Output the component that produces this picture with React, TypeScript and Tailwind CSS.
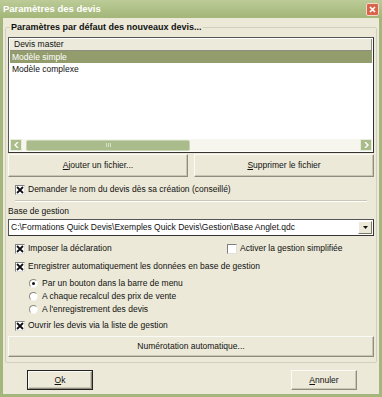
function CheckBox({ checked, label, className = "" }: { checked: boolean; label: string; className?: string }) {
  return (
    <div className={`flex items-center gap-[3px] ${className}`}>
      <div className="w-[10px] h-[10px] bg-white border border-[#1c5180] border-t-[#7f7f7f] border-l-[#7f7f7f] border-b-[#e0e0e0] border-r-[#e0e0e0] flex items-center justify-center">
        {checked && (
          <svg width="8" height="8" viewBox="0 0 8 8">
            <path d="M1 1 L7 7 M7 1 L1 7" stroke="#111" strokeWidth="1.8" />
          </svg>
        )}
      </div>
      <span>{label}</span>
    </div>
  );
}

function Radio({ checked, label }: { checked: boolean; label: string }) {
  return (
    <div className="flex items-center gap-[4px] h-[13px]">
      <div className="w-[9px] h-[9px] rounded-full bg-white border border-t-[#8a8a80] border-l-[#8a8a80] border-b-[#f4f4f0] border-r-[#f4f4f0] flex items-center justify-center">
        {checked && <div className="w-[3px] h-[3px] rounded-full bg-[#111]" />}
      </div>
      <span>{label}</span>
    </div>
  );
}

function Button({ children, className = "" }: { children: React.ReactNode; className?: string }) {
  return (
    <div
      className={`flex items-center justify-center bg-[#ece9d8] border border-t-[#fbfbf6] border-l-[#fbfbf6] border-b-[#8e8c7e] border-r-[#8e8c7e] shadow-[inset_-1px_-1px_0_#c9c6b4] ${className}`}
    >
      {children}
    </div>
  );
}

export default function App() {
  return (
    <div
      className="w-[382px] h-[397px] bg-[#a4b67c] flex flex-col text-[8.5px] text-[#111] overflow-hidden"
      style={{ fontFamily: '"Liberation Sans", Arial, sans-serif' }}
    >
      {/* title bar */}
      <div className="h-[18px] flex items-center justify-between pl-[3px] pr-[3px] bg-gradient-to-b from-[#bccb98] to-[#a3b678]">
        <span className="text-white font-bold text-[9.5px]">Paramètres des devis</span>
        <div className="w-[13px] h-[13px] rounded-[2px] bg-[#d9644c] border border-[#f3d8cc] flex items-center justify-center">
          <svg width="7" height="7" viewBox="0 0 7 7">
            <path d="M1 1 L6 6 M6 1 L1 6" stroke="#fff" strokeWidth="1.6" />
          </svg>
        </div>
      </div>

      {/* body */}
      <div className="flex-1 mx-[3px] mb-[3px] bg-[#ece9d8] flex flex-col px-[2px]">
        {/* group box */}
        <div className="relative mt-[9px] border border-[#d0d0bf] rounded-[2px] px-[2px] pt-[9px] pb-[5px] flex flex-col">
          <div className="absolute -top-[6px] left-[4px] bg-[#ece9d8] px-[1px] font-bold text-[9px] leading-[11px]">
            Paramètres par défaut des nouveaux devis...
          </div>

          {/* list */}
          <div className="h-[116px] border border-t-[#555] border-l-[#555] border-r-[#333] border-b-[#333] bg-white flex flex-col">
            <div className="h-[12px] mx-[1px] mt-[1px] bg-[#ebeadb] border-b border-[#8f8e80] border-r border-r-[#8f8e80] flex items-center pl-[4px]">
              Devis master
            </div>
            <div className="h-[12px] mx-[1px] bg-[#939c6c] text-white flex items-center pl-[2px]">Modèle simple</div>
            <div className="h-[13px] flex items-center pl-[3px]">Modèle complexe</div>
            <div className="flex-1" />
            {/* scrollbar */}
            <div className="h-[12px] mx-[1px] mb-[1px] bg-[#f6f6ee] flex items-center">
              <div className="w-[12px] h-[12px] bg-[#a9bc8a] border border-[#e6eedb] flex items-center justify-center">
                <svg width="5" height="6" viewBox="0 0 5 6">
                  <path d="M4 0 L1 3 L4 6" stroke="#fff" strokeWidth="1.4" fill="none" />
                </svg>
              </div>
              <div className="ml-[4px] w-[164px] h-[11px] bg-[#aabc8c] rounded-[2px] border border-[#c7d4b2] flex items-center justify-center">
                <div className="w-[5px] h-[4px] border-l border-r border-[#d7e1c6] relative">
                  <div className="absolute left-[1px] top-0 w-[1px] h-[4px] bg-[#d7e1c6]" />
                </div>
              </div>
              <div className="flex-1" />
              <div className="w-[12px] h-[12px] bg-[#a9bc8a] border border-[#e6eedb] flex items-center justify-center">
                <svg width="5" height="6" viewBox="0 0 5 6">
                  <path d="M1 0 L4 3 L1 6" stroke="#fff" strokeWidth="1.4" fill="none" />
                </svg>
              </div>
            </div>
          </div>

          {/* add/remove buttons */}
          <div className="flex gap-[6px] mt-[1px]">
            <Button className="flex-1 h-[23px]">
              <span>
                <span className="underline">A</span>jouter un fichier...
              </span>
            </Button>
            <Button className="flex-1 h-[23px]">
              <span>
                <span className="underline">S</span>upprimer le fichier
              </span>
            </Button>
          </div>

          <CheckBox checked label="Demander le nom du devis dès sa création (conseillé)" className="ml-[7px] mt-[7px] h-[11px]" />

          <div className="mx-[7px] mt-[5px] h-[2px] border-t border-[#c8c6b6] border-b border-b-white" />

          <div className="mt-[4px] ml-[0px] h-[11px] flex items-center">Base de gestion</div>

          {/* combo */}
          <div className="mt-[2px] h-[17px] bg-white border border-t-[#555] border-l-[#555] border-r-[#333] border-b-[#333] flex items-center pl-[2px] pr-[1px]">
            <span className="flex-1">C:\Formations Quick Devis\Exemples Quick Devis\Gestion\Base Anglet.qdc</span>
            <div className="w-[14px] h-[13px] bg-[#ece9d8] border border-t-[#fff] border-l-[#fff] border-b-[#7a7868] border-r-[#7a7868] flex items-center justify-center">
              <svg width="5" height="3" viewBox="0 0 5 3">
                <path d="M0 0 L5 0 L2.5 3 Z" fill="#111" />
              </svg>
            </div>
          </div>

          <div className="flex mt-[7px] h-[11px] ml-[7px]">
            <CheckBox checked label="Imposer la déclaration" className="w-[212px]" />
            <CheckBox checked={false} label="Activer la gestion simplifiée" />
          </div>

          <CheckBox checked label="Enregistrer automatiquement les données en base de gestion" className="ml-[7px] mt-[7px] h-[11px]" />

          <div className="flex flex-col ml-[21px] mt-[5px]">
            <Radio checked label="Par un bouton dans la barre de menu" />
            <Radio checked={false} label="A chaque recalcul des prix de vente" />
            <Radio checked={false} label="A l'enregistrement des devis" />
          </div>

          <CheckBox checked label="Ouvrir les devis via la liste de gestion" className="ml-[7px] mt-[4px] h-[11px]" />

          <Button className="mt-[5px] h-[21px]">Numérotation automatique...</Button>
        </div>

        {/* bottom buttons */}
        <div className="flex justify-between mt-[7px] pl-[22px] pr-[20px]">
          <div className="w-[66px] h-[20px] border border-[#222] flex">
            <Button className="flex-1">
              <span className="underline">O</span>
              <span>k</span>
            </Button>
          </div>
          <Button className="w-[66px] h-[20px]">
            <span>
              <span className="underline">A</span>nnuler
            </span>
          </Button>
        </div>
      </div>
    </div>
  );
}
